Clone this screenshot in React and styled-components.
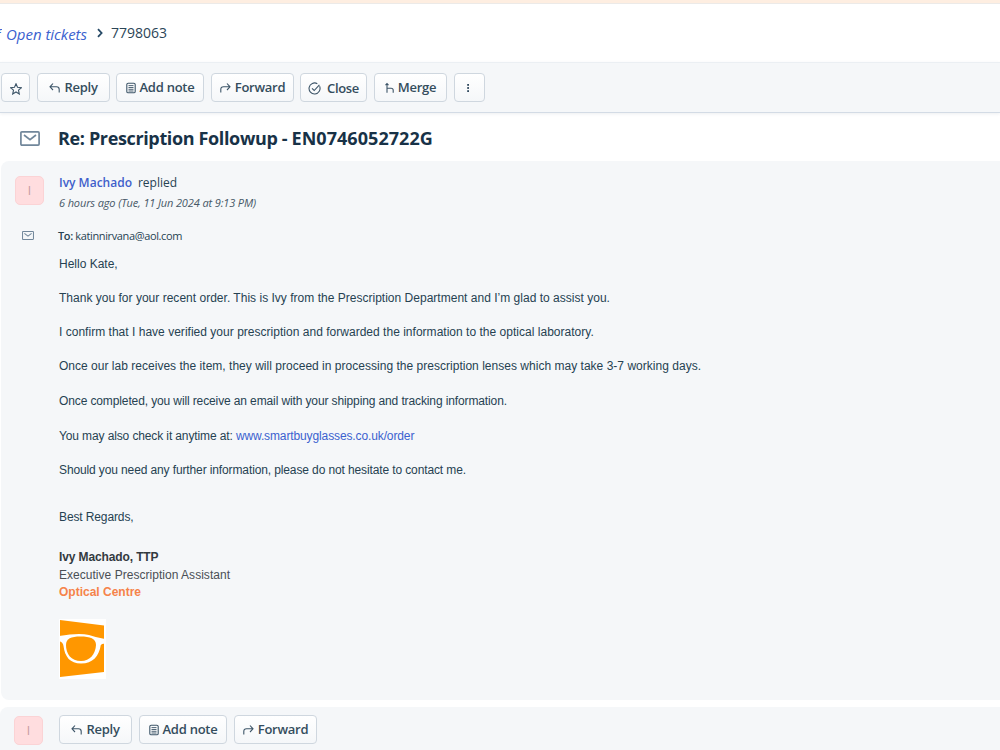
import styled, { createGlobalStyle } from "styled-components";

const App = () => {
  return (
    <Page>
      <GlobalStyle />
      <Banner />
      <Header>
        <Slash>f</Slash>
        <Crumb href="#">Open tickets</Crumb>
        <svg width="8" height="10" viewBox="0 0 8 10" fill="none">
          <path d="M2 1.2 5.6 5 2 8.8" stroke="#264966" strokeWidth="1.8" />
        </svg>
        <TicketId>7798063</TicketId>
      </Header>

      <Toolbar>
        <Button $width={29} $left={1}>
          <StarIcon />
        </Button>
        <Button $width={73} $left={7}>
          <ReplyIcon />
          <Label>Reply</Label>
        </Button>
        <Button $width={88} $left={6}>
          <NoteIcon />
          <Label>Add note</Label>
        </Button>
        <Button $width={83} $left={7}>
          <ForwardIcon />
          <Label>Forward</Label>
        </Button>
        <Button $width={67} $left={6}>
          <CloseIcon />
          <Label $gap={6} $drop={2} $spacing={-0.35}>
            Close
          </Label>
        </Button>
        <Button $width={73} $left={7}>
          <MergeIcon />
          <Label>Merge</Label>
        </Button>
        <Button $width={31} $left={7}>
          <DotsIcon />
        </Button>
      </Toolbar>

      <Subject>
        <MailIcon width={20} height={15} />
        <Title>
          Re: Prescription Followup - <Code>EN0746052722G</Code>
        </Title>
      </Subject>

      <Message>
        <Sender>
          <Avatar>I</Avatar>
          <div>
            <Who>
              <Name>Ivy Machado</Name>
              <span>replied</span>
            </Who>
            <When>6 hours ago (Tue, 11 Jun 2024 at 9:13 PM)</When>
          </div>
        </Sender>
        <Recipient>
          <MailIcon width={12} height={9} />
          <To>
            <b>To:</b> katinnirvana@aol.com
          </To>
        </Recipient>
        <Body>
          <Line>Hello Kate,</Line>
          <Line $top={16} $spacing={0.015}>
            Thank you for your recent order. This is Ivy from the Prescription
            Department and I’m glad to assist you.
          </Line>
          <Line $top={16} $spacing={0.02}>
            I confirm that I have verified your prescription and forwarded the
            information to the optical laboratory.
          </Line>
          <Line $top={16} $spacing={0.02}>
            Once our lab receives the item, they will proceed in processing the
            prescription lenses which may take 3-7 working days.
          </Line>
          <Line $top={17} $spacing={-0.12}>
            Once completed, you will receive an email with your shipping and
            tracking information.
          </Line>
          <Line $top={17} $spacing={-0.12}>
            You may also check it anytime at:{" "}
            <Link href="#">www.smartbuyglasses.co.uk/order</Link>
          </Line>
          <Line $top={16} $spacing={-0.12}>
            Should you need any further information, please do not hesitate to
            contact me.
          </Line>
          <Line $top={29} $spacing={-0.12}>
            Best Regards,
          </Line>
          <Line $top={22} $bold $color="#333a40" $spacing={-0.12}>
            Ivy Machado, TTP
          </Line>
          <Line $color="#4a4f55" $spacing={0.03}>
            Executive Prescription Assistant
          </Line>
          <Line $top={-1} $bold $color="#f5834a">
            Optical Centre
          </Line>
          <Logo />
        </Body>
      </Message>

      <Footer>
        <Avatar>I</Avatar>
        <Button $width={73} $left={16}>
          <ReplyIcon />
          <Label>Reply</Label>
        </Button>
        <Button $width={88} $left={7}>
          <NoteIcon />
          <Label>Add note</Label>
        </Button>
        <Button $width={83} $left={7}>
          <ForwardIcon />
          <Label>Forward</Label>
        </Button>
      </Footer>
    </Page>
  );
};

export default App;

const Icon = ({ children, width = 12, height = 12, ...rest }) => (
  <svg
    width={width}
    height={height}
    viewBox={`0 0 ${width} ${height}`}
    fill="none"
    stroke="#3d5568"
    strokeWidth="1.1"
    {...rest}
  >
    {children}
  </svg>
);

const StarIcon = () => (
  <Icon style={{ marginTop: 3 }}>
    <path d="M6 .8 7.5 4.3 11.4 4.7 8.5 7.2 9.3 11 6 9 2.7 11 3.5 7.2.6 4.7 4.5 4.3Z" />
  </Icon>
);

const ReplyIcon = () => (
  <Icon width={11}>
    <path d="M4 1.5 1 4.8 4 8M1 4.8H7.5Q10.2 4.8 10.2 7.5V10.5" />
  </Icon>
);

const ForwardIcon = () => (
  <Icon width={11}>
    <path d="M7 1.5 10 4.8 7 8M10 4.8H3.5Q.8 4.8 .8 7.5V10.5" />
  </Icon>
);

const NoteIcon = () => (
  <Icon width={10} height={12}>
    <rect x=".8" y="1.2" width="8.4" height="9.6" rx="1.4" />
    <path d="M2.5 3.6H7.5M2.5 5.5H7.5M2.5 7.3H7.5M2.5 9H7.5" strokeWidth=".9" />
  </Icon>
);

const CloseIcon = () => (
  <Icon width={13} height={13} style={{ marginTop: 2 }}>
    <path d="M11.6 4.3A5.5 5.5 0 1 1 9.3 1.7" />
    <path d="M4 6.3 6.2 8.5 11.4 2.8" />
  </Icon>
);

const MergeIcon = () => (
  <Icon width={9} height={12}>
    <path d="M.5 3.2 2 1.6 3.5 3.2M2 1.6V10.8M2 6.3H6Q8.2 6.3 8.2 8.300V10.8" />
  </Icon>
);

const DotsIcon = () => (
  <Icon width={4} height={10} fill="#30495e" stroke="none" style={{ marginRight: 3 }}>
    <rect x="1.2" y="1" width="1.8" height="1.8" />
    <rect x="1.2" y="4.1" width="1.8" height="1.8" />
    <rect x="1.2" y="7.2" width="1.8" height="1.8" />
  </Icon>
);

const MailIcon = ({ width, height }) => (
  <svg
    width={width}
    height={height}
    viewBox="0 0 20 15"
    fill="none"
    stroke="#71879b"
    strokeWidth="1.7"
  >
    <rect x=".9" y=".9" width="18.2" height="13.2" rx="1" />
    <path d="M4 4 10 8.6 16 4" />
  </svg>
);

const Logo = () => (
  <LogoBox>
    <svg width="46" height="59" viewBox="0 0 46 59">
      <path d="M1 1 45 6.5V53L1 58Z" fill="#ff9700" />
      <path
        d="M0 17Q20 13.5 30 16Q37 18.5 46 20V24.5Q42.5 24.5 41.8 26C40 37 34 44.5 22 44.5C11 44.5 6 38 4.500 27Q4 23 0 22Z"
        fill="#fff"
      />
      <path
        d="M21.500 17.500C31 17.500 37 19.500 37 26C36.500 35 31 42 22 42C12 42 7 35 7 26C7 19.500 12 17.500 21.500 17.500Z"
        fill="#ff9700"
      />
    </svg>
  </LogoBox>
);

const GlobalStyle = createGlobalStyle`
  * {
    box-sizing: border-box;
  }
  body {
    margin: 0;
    background: #fff;
    font-family: "Open Sans", "Noto Sans", sans-serif;
    color: #264252;
  }
`;

const Page = styled.div`
  width: 1000px;
  height: 750px;
  overflow: hidden;
  background: #fff;
`;

const Banner = styled.div`
  height: 4px;
  background: #feeee1;
  border-bottom: 1px solid #eceae8;
`;

const Header = styled.div`
  display: flex;
  align-items: center;
  height: 58px;
  padding-top: 2px;
  font-size: 14px;
  white-space: nowrap;
  svg {
    margin: 0 0 2px 8px;
  }
`;

const Slash = styled.span`
  width: 6px;
  margin-left: -4px;
  margin-right: 4px;
  font-style: italic;
  color: #3b62cf;
  overflow: hidden;
`;

const Crumb = styled.a`
  width: 82px;
  font-size: 15px;
  font-style: italic;
  font-weight: 500;
  letter-spacing: -0.02px;
  line-height: 20px;
  color: #3b62cf;
  text-decoration: none;
`;

const TicketId = styled.span`
  margin: 0 0 3px 7px;
  color: #2b4557;
`;

const Toolbar = styled.div`
  display: flex;
  align-items: center;
  height: 51px;
  background: #f5f7f9;
  border-top: 1px solid #ebeff3;
  border-bottom: 1px solid #d3dbe5;
  box-shadow: 0 1px 3px rgba(24, 50, 71, 0.08);
`;

const Button = styled.button`
  display: flex;
  align-items: center;
  justify-content: center;
  flex-shrink: 0;
  width: ${({ $width }) => $width}px;
  height: 29px;
  margin-left: ${({ $left }) => $left}px;
  padding: 0;
  border: 1px solid #cfd7df;
  border-radius: 4px;
  background: linear-gradient(#fff, #f5f7f9);
  color: #344d5d;
  font-family: inherit;
`;

const Label = styled.span`
  margin-left: ${({ $gap = 4 }) => $gap}px;
  padding-top: ${({ $drop = 0 }) => $drop}px;
  padding-bottom: 2px;
  font-size: 13px;
  font-weight: 600;
  line-height: 20px;
  letter-spacing: ${({ $spacing = -0.25 }) => $spacing}px;
  white-space: nowrap;
`;

const Subject = styled.div`
  display: flex;
  align-items: center;
  height: 48px;
  padding: 2px 0 0 20px;
`;

const Title = styled.h1`
  margin: 0 0 0 18px;
  font-size: 18px;
  font-weight: 700;
  line-height: 26px;
  letter-spacing: -0.36px;
  white-space: nowrap;
  color: #183247;
`;

const Code = styled.span`
  letter-spacing: 0.05px;
`;

const Message = styled.section`
  height: 539px;
  margin-left: 1px;
  padding: 12px 0 0 14px;
  border-radius: 8px 0 0 8px;
  background: #f5f7f9;
`;

const Sender = styled.div`
  display: flex;
  gap: 15px;
`;

const Avatar = styled.div`
  width: 29px;
  height: 29px;
  margin-top: 3px;
  flex-shrink: 0;
  border-radius: 5px;
  border: 1px solid #fbd3d5;
  background: #ffdddf;
  color: #c49a9c;
  font-size: 12px;
  line-height: 28px;
  text-align: center;
`;

const Who = styled.div`
  display: flex;
  gap: 6px;
  font-size: 12px;
  line-height: 20px;
`;

const Name = styled.span`
  font-weight: 600;
  color: #3f5fcb;
`;

const When = styled.div`
  font-size: 11px;
  font-style: italic;
  line-height: 20px;
  letter-spacing: -0.13px;
  color: #475867;
`;

const Recipient = styled.div`
  display: flex;
  align-items: center;
  height: 20px;
  margin-top: 12px;
  padding-left: 7px;
`;

const To = styled.div`
  margin-left: 24px;
  font-size: 11px;
  letter-spacing: -0.37px;
  color: #264252;
  b {
    font-weight: 600;
  }
`;

const Body = styled.div`
  padding: 10px 0 0 44px;
  font-family: "Liberation Sans", Arial, sans-serif;
  font-size: 12px;
`;

const Line = styled.div`
  margin-top: ${({ $top = 0 }) => $top}px;
  line-height: 18px;
  letter-spacing: ${({ $spacing = 0 }) => $spacing}px;
  white-space: nowrap;
  font-weight: ${({ $bold }) => ($bold ? 700 : 400)};
  color: ${({ $color = "#264252" }) => $color};
`;

const Link = styled.a`
  color: #3b62cf;
  text-decoration: none;
`;

const LogoBox = styled.div`
  width: 47px;
  height: 60px;
  margin-top: 18px;
  background: #fff;
`;

const Footer = styled.div`
  display: flex;
  align-items: center;
  height: 60px;
  margin-top: 7px;
  padding: 0 0 15px 14px;
  border-radius: 8px 0 0 0;
  background: #f5f7f9;
  ${Avatar} {
    margin-top: 1px;
  }
`;
